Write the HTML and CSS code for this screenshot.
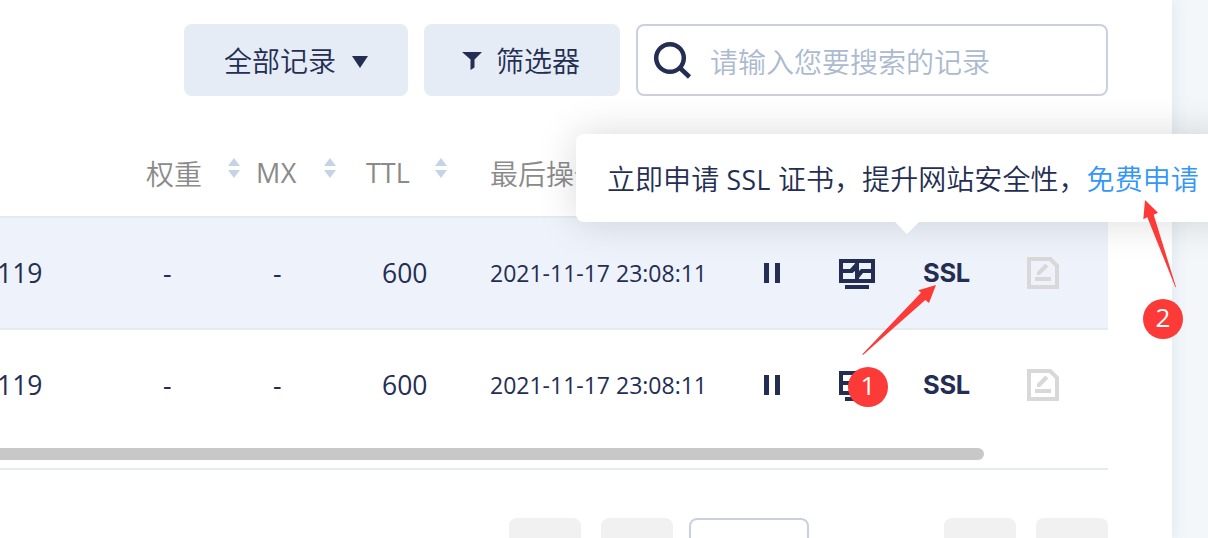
FILE: index.html
```html
<!DOCTYPE html>
<html lang="zh-CN">

<head>
    <meta charset="UTF-8">
    <meta name="viewport" content="width=device-width, initial-scale=1.0">
    <title>DNS 解析记录</title>
    <link rel="stylesheet" href="styles.css">
</head>

<body>
    <!-- Shared icons -->
    <svg class="icon-defs" width="0" height="0">
        <symbol id="icon-pause" viewBox="0 0 16 20">
            <path d="M0 0h5v20H0zM11 0h5v20h-5z" fill="currentColor" />
        </symbol>
        <symbol id="icon-monitor" viewBox="0 0 36 30">
            <path d="M2 2h32v20H2zM6 28h24" fill="none" stroke="currentColor" stroke-width="4" />
            <path d="M3 10h8l5-5.5V3h4v9l2-2h11v4h-9l-4 5v2h-4v-9l-2.5 2H3z" fill="currentColor" />
        </symbol>
        <symbol id="icon-edit" viewBox="0 0 32 32">
            <path d="M2 2h21.2L30 8.8V30H2z" fill="none" stroke="currentColor" stroke-width="4" />
            <path d="M10 18v-3l8.3-8.6 3 3L13 18zM8 20h16v4H8z" fill="currentColor" />
        </symbol>
        <symbol id="icon-sort" viewBox="0 0 12 20">
            <path d="M6 0l6 8H0zM0 12h12l-6 8z" fill="currentColor" />
        </symbol>
    </svg>

    <main class="panel">
        <div class="toolbar">
            <button class="btn btn-type">全部记录
                <svg width="16" height="12" viewBox="0 0 16 12"><path d="M0 0h16L8 12z" fill="currentColor" /></svg>
            </button>
            <button class="btn btn-filter">
                <svg width="20" height="18" viewBox="0 0 20 18"><path d="M0 0h20l-7.5 7.5V15.5L8.5 18V7.5z" fill="currentColor" /></svg>
                筛选器
            </button>
            <label class="search">
                <svg width="40" height="40" viewBox="0 0 40 40"><circle cx="18" cy="18" r="13.8" /><path d="M27.5 27.5l10 9.5" /></svg>
                <input type="text" placeholder="请输入您要搜索的记录">
            </label>
        </div>

        <div class="table">
            <div class="row head">
                <span></span>
                <span class="th">权重<svg class="sort"><use href="#icon-sort" /></svg></span>
                <span class="th mx"><span class="en">MX</span><svg class="sort"><use href="#icon-sort" /></svg></span>
                <span class="th ttl"><span class="en">TTL</span><svg class="sort"><use href="#icon-sort" /></svg></span>
                <span class="th">最后操作</span>
            </div>
            <div class="row active">
                <span class="value">119</span>
                <span class="num dash">-</span>
                <span class="num dash">-</span>
                <span class="num">600</span>
                <span class="time">2021-11-17 23:08:11</span>
                <div class="actions">
                    <svg class="pause"><use href="#icon-pause" /></svg>
                    <svg class="monitor"><use href="#icon-monitor" /></svg>
                    <b class="ssl">SSL</b>
                    <svg class="edit"><use href="#icon-edit" /></svg>
                </div>
            </div>
            <div class="row last">
                <span class="value">119</span>
                <span class="num dash">-</span>
                <span class="num dash">-</span>
                <span class="num">600</span>
                <span class="time">2021-11-17 23:08:11</span>
                <div class="actions">
                    <svg class="pause"><use href="#icon-pause" /></svg>
                    <svg class="monitor"><use href="#icon-monitor" /></svg>
                    <b class="ssl">SSL</b>
                    <svg class="edit"><use href="#icon-edit" /></svg>
                </div>
            </div>
            <div class="scrollbar"></div>
        </div>

        <div class="pagination">
            <span class="page"></span>
            <span class="page"></span>
            <span class="page-input"></span>
            <span class="page"></span>
            <span class="page"></span>
        </div>
    </main>

    <div class="tooltip">立即申请<span class="en"> SSL </span>证书，提升网站安全性，<a href="#">免费申请</a></div>

    <!-- Step markers -->
    <svg class="arrows" viewBox="0 0 1208 538">
        <path d="M936 285l-7 18-3.7-3L863 355l-.7-.7L921 292.7l-2.7-2.4z" />
        <path d="M1145 200l13 12.7-4.3 2L1176 287l-.6.2L1147.3 217.3l-4 2z" />
    </svg>
    <span class="step step-1">1</span>
    <span class="step step-2">2</span>
</body>

</html>
```

FILE: styles.css
```css
:root {
    --text-color: #242e52;
    --muted: #8a8a8a;
    --line: #e6e9ed;
    --btn-bg: #e5ecf6;
    --red: #fc3a38;
}

* {
    margin: 0;
    padding: 0;
    box-sizing: border-box;
}

body {
    height: 538px;
    position: relative;
    overflow: hidden;
    font-family: "Noto Sans CJK SC", sans-serif;
    font-size: 28px;
    font-weight: 350;
    color: var(--text-color);
    background-color: #f3f7fa;
}

svg {
    display: block;
    flex: none;
}

.icon-defs {
    position: absolute;
}

.en {
    font-family: "Open Sans", sans-serif;
    font-size: 27px;
    font-weight: 400;
}

.panel {
    width: 1172px;
    height: 538px;
    padding: 24px 64px 0 0;
    overflow: hidden;
    background-color: #fff;
    box-shadow: 0 0 16px rgba(60, 90, 130, 0.12);
}

.toolbar {
    display: flex;
    justify-content: flex-end;
    gap: 16px;
    height: 72px;
}

.btn {
    display: flex;
    align-items: center;
    border: none;
    border-radius: 8px;
    font: inherit;
    color: inherit;
    background-color: var(--btn-bg);
    padding: 0 40px;
    gap: 16px;
    white-space: nowrap;
    cursor: pointer;
}

.btn-type svg {
    margin-top: 3px;
}

.btn-filter {
    padding-left: 38px;
    gap: 14px;
}

.btn-filter svg {
    margin-top: 2px;
}

.search {
    display: flex;
    align-items: center;
    width: 472px;
    padding-left: 14px;
    border: 2px solid #cbd0e0;
    border-radius: 8px;
}

.search svg {
    fill: none;
    stroke: var(--text-color);
    stroke-width: 4.5;
}

.search input {
    flex: 1;
    min-width: 0;
    margin: 2px 0 0 18px;
    border: none;
    outline: none;
    font: inherit;
    background: none;
}

.search input::placeholder {
    color: #abbacf;
    opacity: 1;
}

.row {
    display: grid;
    grid-template-columns: 146px 110px 110px 124px 256px 1fr;
    align-items: center;
    height: 112px;
    border-bottom: 2px solid var(--line);
}

.head {
    height: 122px;
    padding-top: 33px;
    color: var(--muted);
}

.active {
    background-color: #eef3fb;
}

.last {
    height: 110px;
    border-bottom: none;
}

.th {
    display: flex;
    align-items: center;
    white-space: nowrap;
}

.sort {
    width: 12px;
    height: 20px;
    margin: 0 16px 10px auto;
    color: #c5d3e8;
}

.mx .en {
    letter-spacing: 0.5px;
}

.mx .sort {
    margin-right: 30px;
}

.ttl .sort {
    margin-right: 43px;
}

.value,
.num,
.time {
    font-family: "Open Sans", sans-serif;
    font-size: 26.5px;
    font-weight: 400;
}

.value {
    margin-left: -3px;
}

.num {
    padding-left: 16px;
}

.dash {
    padding-left: 17px;
}

.time {
    font-size: 23px;
    white-space: nowrap;
}

.actions {
    display: grid;
    grid-template-columns: 75px 84px 104px auto;
    align-items: center;
    padding-left: 18px;
}

.pause {
    width: 16px;
    height: 20px;
}

.monitor {
    width: 36px;
    height: 30px;
    margin-top: 2px;
}

.ssl {
    margin-top: -1px;
    font-family: Inter, sans-serif;
    font-size: 25.5px;
    font-weight: 700;
    letter-spacing: -0.3px;
}

.edit {
    width: 32px;
    height: 32px;
    color: #d8d8d8;
}

.scrollbar {
    width: 984px;
    height: 12px;
    margin-top: 8px;
    border-radius: 0 6px 6px 0;
    background-color: #c8c8c8;
}

.table {
    height: 374px;
    border-bottom: 2px solid var(--line);
}

.pagination {
    display: flex;
    justify-content: flex-end;
    gap: 20px;
    margin-top: 48px;
}

.page {
    width: 72px;
    height: 72px;
    border-radius: 8px;
    background-color: #f1f1f1;
}

.page-input {
    width: 120px;
    height: 72px;
    margin: 0 115px 0 -4px;
    border: 2px solid #cbd0e0;
    border-radius: 8px;
}

.tooltip {
    position: absolute;
    left: 576px;
    top: 134px;
    width: 662px;
    height: 88px;
    padding-left: 31px;
    line-height: 88px;
    letter-spacing: 0.06px;
    white-space: nowrap;
    border-radius: 8px;
    background-color: #fff;
    box-shadow: 0 0 40px rgba(0, 0, 0, 0.15);
}

.tooltip::after {
    content: "";
    position: absolute;
    left: 319px;
    top: 88px;
    border: 12px solid transparent;
    border-top-color: #fff;
    border-bottom: none;
}

.tooltip .en {
    font-size: 26.5px;
    letter-spacing: 0.4px;
}

.tooltip a {
    color: #3296fa;
    text-decoration: none;
}

.arrows {
    position: absolute;
    left: 0;
    top: 0;
    width: 1208px;
    height: 538px;
    fill: var(--red);
    pointer-events: none;
}

.step {
    position: absolute;
    width: 40px;
    height: 40px;
    border-radius: 50%;
    font-family: "Open Sans", sans-serif;
    font-size: 26px;
    font-weight: 400;
    line-height: 37px;
    text-align: center;
    color: #fff;
    background-color: var(--red);
}

.step-1 {
    left: 848px;
    top: 367px;
}

.step-2 {
    left: 1143px;
    top: 299px;
}
```
